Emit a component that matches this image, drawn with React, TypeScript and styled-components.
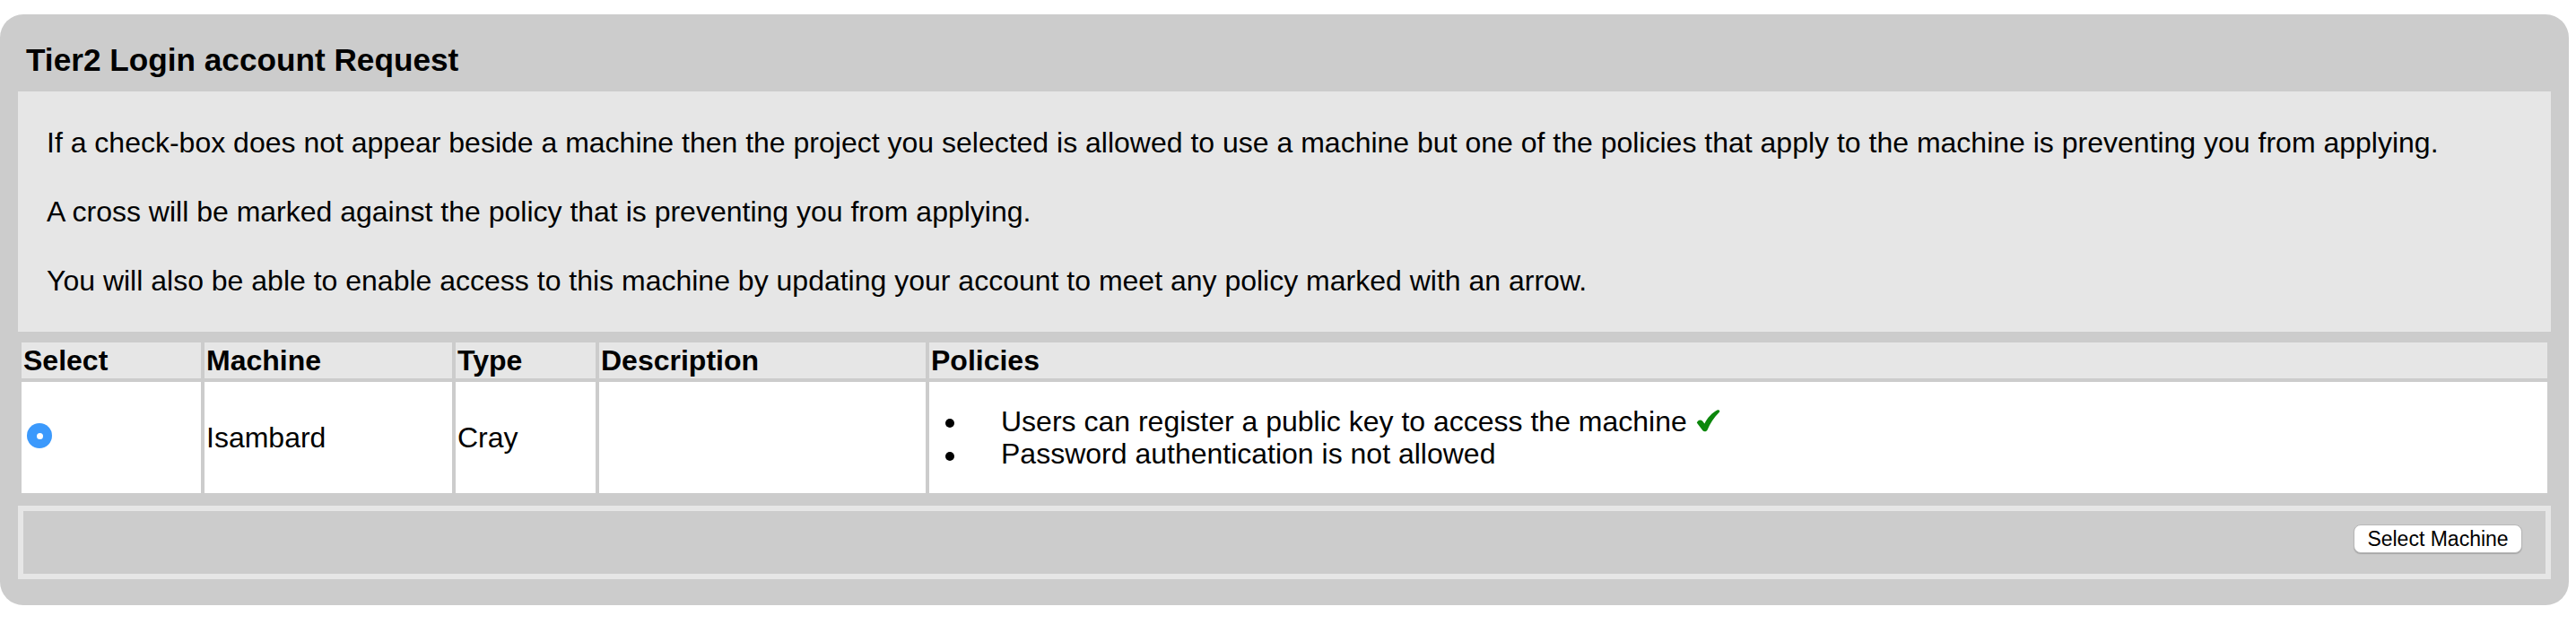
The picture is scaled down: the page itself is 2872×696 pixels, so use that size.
import React from "react";
import styled, { createGlobalStyle } from "styled-components";

const GlobalStyle = createGlobalStyle`
  html, body {
    margin: 0;
    padding: 0;
    background: #ffffff;
  }
  body {
    font-family: "Liberation Sans", Arial, Helvetica, sans-serif;
    color: #000000;
  }
`;

const Page = styled.div`
  padding: 16px 8px 0 0;
`;

const Panel = styled.section`
  background: #cccccc;
  border-radius: 26px;
  padding: 0 20px 29px 20px;
`;

const Title = styled.h3`
  margin: 0;
  padding: 29px 9px 14px 9px;
  font-size: 35.2px;
  line-height: 43px;
  font-weight: bold;
`;

const Notice = styled.div`
  background: #e6e6e6;
  padding: 3px 32px;
`;

const NoticeText = styled.p`
  margin: 32px 0;
  font-size: 32px;
  line-height: 44.8px;
`;

const Table = styled.table`
  width: 100%;
  margin-top: 8px;
  border-collapse: separate;
  border-spacing: 4px;
  font-size: 32px;
`;

const HeadCell = styled.th<{ $w?: number }>`
  box-sizing: border-box;
  ${(p) => (p.$w ? `width: ${p.$w}px;` : "")}
  background: #e6e6e6;
  padding: 2px;
  text-align: left;
  font-weight: bold;
  line-height: 36px;
`;

const Cell = styled.td`
  background: #ffffff;
  padding: 2px;
  height: 120px;
  vertical-align: middle;
  line-height: 36.8px;
`;

const Radio = styled.input.attrs({ type: "radio" })`
  appearance: none;
  -webkit-appearance: none;
  display: block;
  margin: 0 0 4px 4px;
  width: 28px;
  height: 28px;
  border-radius: 50%;
  background: #3b99fc;
  position: relative;
  &::after {
    content: "";
    position: absolute;
    left: 10.5px;
    top: 10.5px;
    width: 7px;
    height: 7px;
    border-radius: 50%;
    background: #ffffff;
  }
`;

const PolicyList = styled.ul`
  margin: 0;
  padding: 0;
  list-style: none;
`;

const PolicyItem = styled.li`
  display: grid;
  grid-template-columns: 78px 1fr;
  align-items: center;
  &::before {
    content: "";
    width: 10px;
    height: 10px;
    border-radius: 50%;
    background: #000000;
    margin-left: 16px;
    margin-top: 4px;
  }
`;

const CheckIcon = styled.svg`
  width: 27px;
  height: 25px;
  margin-left: 10px;
  vertical-align: -1px;
`;

const Footer = styled.div`
  border: 6px solid #e6e6e6;
  background: #cccccc;
  margin-top: 10px;
  display: flex;
  justify-content: flex-end;
  align-items: flex-start;
  padding: 15px 26px 0 0;
  box-sizing: border-box;
  height: 82px;
`;

const Button = styled.button`
  width: 188px;
  height: 32px;
  background: #ffffff;
  border: 1px solid #b8b8b8;
  border-radius: 8px;
  box-shadow: 0 1px 1px rgba(0, 0, 0, 0.2);
  font-family: "Liberation Sans", Arial, sans-serif;
  font-size: 23px;
  color: #000000;
  padding: 0;
`;

const columns = [
  { label: "Select", w: 200 },
  { label: "Machine", w: 276 },
  { label: "Type", w: 156 },
  { label: "Description", w: 364 },
  { label: "Policies" },
];

function Check() {
  return (
    <CheckIcon viewBox="0 0 27 25" aria-label="✔">
      <path
        d="M0.8 14.5 C2 11.5 5 10.6 7 12.6 L9.4 15.4 C12.8 9 17.6 3.6 23.4 0.6 C25.6 -0.4 27.2 1.4 25.6 3 C19.8 8.8 15.6 15.4 12.6 22.4 C11.8 24.4 8.8 24.8 7.4 23.2 Z"
        fill="#0c870c"
      />
    </CheckIcon>
  );
}

export default function App() {
  return (
    <>
      <GlobalStyle />
      <Page>
        <Panel>
          <Title>Tier2 Login account Request</Title>
          <Notice>
            <NoticeText>
              If a check-box does not appear beside a machine then the project you selected is allowed to use a machine but one of the policies that apply to the machine is preventing you from applying.
            </NoticeText>
            <NoticeText>A cross will be marked against the policy that is preventing you from applying.</NoticeText>
            <NoticeText>
              You will also be able to enable access to this machine by updating your account to meet any policy marked with an arrow.
            </NoticeText>
          </Notice>
          <Table>
            <thead>
              <tr>
                {columns.map((c) => (
                  <HeadCell key={c.label} $w={c.w}>
                    {c.label}
                  </HeadCell>
                ))}
              </tr>
            </thead>
            <tbody>
              <tr>
                <Cell>
                  <Radio name="machine" defaultChecked />
                </Cell>
                <Cell>Isambard</Cell>
                <Cell>Cray</Cell>
                <Cell></Cell>
                <Cell>
                  <PolicyList>
                    <PolicyItem>
                      <span>
                        Users can register a public key to access the machine<Check />
                      </span>
                    </PolicyItem>
                    <PolicyItem>
                      <span>Password authentication is not allowed</span>
                    </PolicyItem>
                  </PolicyList>
                </Cell>
              </tr>
            </tbody>
          </Table>
          <Footer>
            <Button type="button">Select Machine</Button>
          </Footer>
        </Panel>
      </Page>
    </>
  );
}
